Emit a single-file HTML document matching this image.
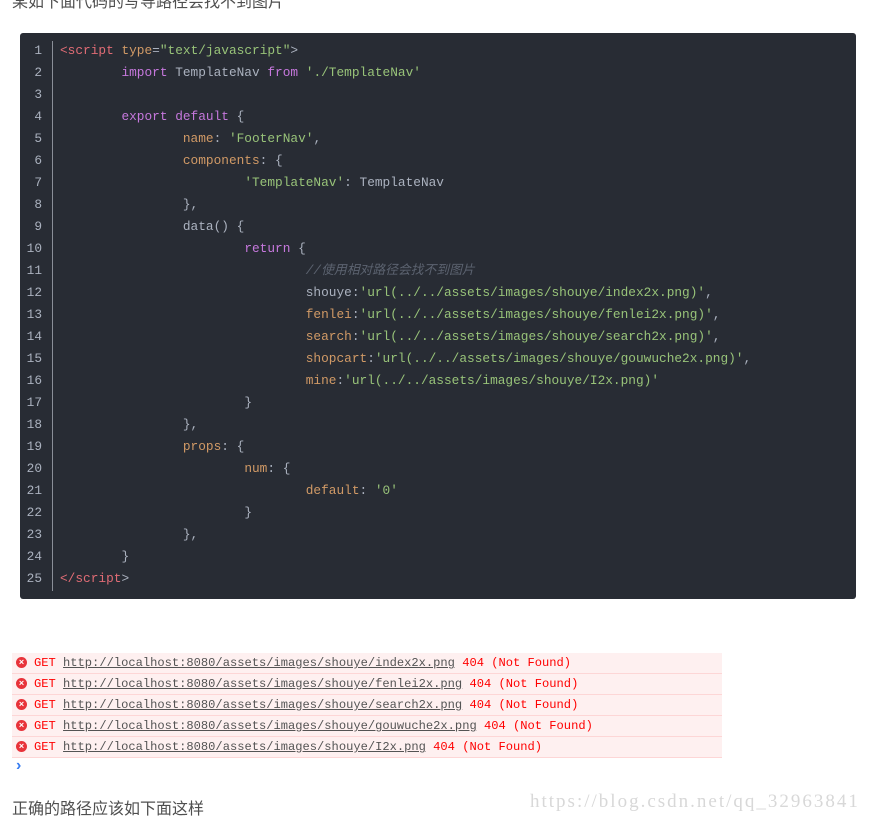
<!DOCTYPE html>
<html><head><meta charset="utf-8"><style>
body{margin:0;width:871px;height:823px;background:#fff;position:relative;overflow:hidden;font-family:"Liberation Sans","Noto Sans CJK SC",sans-serif}
.top{position:absolute;left:12px;top:-12px;font-size:16px;color:#4f4f4f}
.code{position:absolute;left:20px;top:33px;width:836px;height:566px;background:#282c34;border-radius:3px}
.ln{position:absolute;left:0;top:7px;width:22px;text-align:right;font:12.8px/22px "Liberation Mono","Noto Sans CJK SC",monospace;color:#abb2bf}
.sep{position:absolute;left:32px;top:8px;width:1px;height:550px;background:#8a8f98}
pre{position:absolute;left:40px;top:7px;margin:0;font:12.8px/22px "Liberation Mono","Noto Sans CJK SC",monospace;color:#abb2bf;tab-size:8}
.k{color:#c678dd}.s{color:#98c379}.t{color:#e06c75}.a{color:#d19a66}.c{color:#5c6370;font-style:italic}
.con{position:absolute;left:12px;top:653px;width:710px}
.row{height:20px;border-bottom:1px solid #fdd6d6;background:#fef0f0;font:12.1px/20px "Liberation Mono",monospace;color:#f00;white-space:pre;position:relative;padding-left:22px}
.row i{position:absolute;left:4px;top:4px;width:11px;height:11px;border-radius:50%;background:#e8333a;color:#fff;font:bold 9px/11px "Liberation Sans",sans-serif;text-align:center;font-style:normal}
.row u{color:#545454}
.pr{position:absolute;left:16px;top:757px;color:#367cf1;font:bold 16px "Liberation Sans",sans-serif}
.bt{position:absolute;left:12px;top:795px;font-size:16px;color:#4f4f4f}
.wm{position:absolute;left:530px;top:791px;font:19px "Liberation Serif",serif;color:#d8d8d8;letter-spacing:2px}
</style></head><body>
<div class="top">某如下面代码的写导路径会找不到图片</div>
<div class="code">
<div class="ln">1<br>2<br>3<br>4<br>5<br>6<br>7<br>8<br>9<br>10<br>11<br>12<br>13<br>14<br>15<br>16<br>17<br>18<br>19<br>20<br>21<br>22<br>23<br>24<br>25</div>
<div class="sep"></div>
<pre>
<span class="t">&lt;script</span> <span class="a">type</span>=<span class="s">"text/javascript"</span>&gt;
	<span class="k">import</span> TemplateNav <span class="k">from</span> <span class="s">'./TemplateNav'</span>

	<span class="k">export</span> <span class="k">default</span> {
		<span class="a">name</span>: <span class="s">'FooterNav'</span>,
		<span class="a">components</span>: {
			<span class="s">'TemplateNav'</span>: TemplateNav
		},
		data() {
			<span class="k">return</span> {
				<span class="c">//使用相对路径会找不到图片</span>
				shouye:<span class="s">'url(../../assets/images/shouye/index2x.png)'</span>,
				<span class="a">fenlei</span>:<span class="s">'url(../../assets/images/shouye/fenlei2x.png)'</span>,
				<span class="a">search</span>:<span class="s">'url(../../assets/images/shouye/search2x.png)'</span>,
				<span class="a">shopcart</span>:<span class="s">'url(../../assets/images/shouye/gouwuche2x.png)'</span>,
				<span class="a">mine</span>:<span class="s">'url(../../assets/images/shouye/I2x.png)'</span>
			}
		},
		<span class="a">props</span>: {
			<span class="a">num</span>: {
				<span class="a">default</span>: <span class="s">'0'</span>
			}
		},
	}
<span class="t">&lt;/script</span>&gt;</pre>
</div>
<div class="con">
<div class="row"><i>×</i>GET <u>http://localhost:8080/assets/images/shouye/index2x.png</u> 404 (Not Found)</div>
<div class="row"><i>×</i>GET <u>http://localhost:8080/assets/images/shouye/fenlei2x.png</u> 404 (Not Found)</div>
<div class="row"><i>×</i>GET <u>http://localhost:8080/assets/images/shouye/search2x.png</u> 404 (Not Found)</div>
<div class="row"><i>×</i>GET <u>http://localhost:8080/assets/images/shouye/gouwuche2x.png</u> 404 (Not Found)</div>
<div class="row"><i>×</i>GET <u>http://localhost:8080/assets/images/shouye/I2x.png</u> 404 (Not Found)</div>
</div>
<div class="pr">›</div>
<div class="bt">正确的路径应该如下面这样</div>
<div class="wm">https://blog.csdn.net/qq_32963841</div>
</body></html>
